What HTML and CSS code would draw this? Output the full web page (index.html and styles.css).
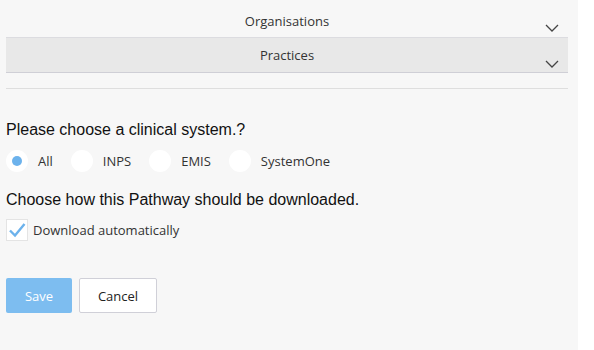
FILE: index.html
```html
<!DOCTYPE html>
<html lang="en">
<head>
    <meta charset="UTF-8">
    <meta name="viewport" content="width=device-width, initial-scale=1.0">
    <title>Pathway Settings</title>
    <link rel="stylesheet" href="styles.css">
</head>
<body>
    <div class="panel">
        <div class="accordion">
            <div class="acc-item">
                <span class="acc-title">Organisations</span>
                <svg class="chevron" width="14" height="8" viewBox="0 0 14 8"><path d="M1 1 L7 7 L13 1" fill="none" stroke="#444" stroke-width="1.3"/></svg>
            </div>
            <div class="acc-item acc-active">
                <span class="acc-title">Practices</span>
                <svg class="chevron" width="14" height="8" viewBox="0 0 14 8"><path d="M1 1 L7 7 L13 1" fill="none" stroke="#444" stroke-width="1.3"/></svg>
            </div>
        </div>
        <hr class="divider">

        <h2 class="question">Please choose a clinical system.?</h2>
        <div class="radio-group">
            <label class="radio"><span class="radio-circle checked"></span>All</label>
            <label class="radio"><span class="radio-circle"></span>INPS</label>
            <label class="radio"><span class="radio-circle"></span>EMIS</label>
            <label class="radio"><span class="radio-circle"></span>SystemOne</label>
        </div>

        <h2 class="question">Choose how this Pathway should be downloaded.</h2>
        <label class="checkbox">
            <span class="check-box">
                <svg width="18" height="16" viewBox="0 0 18 16"><path d="M2 8.5 L7 13.5 L16.5 2" fill="none" stroke="#6cb2ec" stroke-width="2.4"/></svg>
            </span>
            Download automatically
        </label>

        <div class="actions">
            <button class="btn btn-save">Save</button>
            <button class="btn btn-cancel">Cancel</button>
        </div>
    </div>
</body>
</html>
```

FILE: styles.css
```css
body {
    margin: 0;
    background-color: #fff;
    font-family: "Open Sans", "Noto Sans", sans-serif;
    color: #333;
}

.panel {
    width: 562px;
    height: 350px;
    padding: 0 10px 0 6px;
    background-color: #f7f7f7;
    overflow: hidden;
}

.accordion {
    display: flex;
    flex-direction: column;
}

.acc-item {
    position: relative;
    height: 36px;
    display: flex;
    justify-content: center;
    padding-top: 1px;
    border-bottom: 1px solid #dcdce0;
    font-size: 13px;
    line-height: 40px;
    color: #333;
}

.acc-active {
    height: 33px;
    background-color: #e8e8e8;
    border-bottom: 1px solid #cfcfd6;
    line-height: 33px;
}

.chevron {
    position: absolute;
    right: 9px;
    bottom: 5px;
}

.acc-active .chevron {
    bottom: 4px;
}

.divider {
    margin: 15px 0 0 0;
    border: none;
    border-top: 1px solid #dedede;
}

.question {
    margin: 32px 0 0 0;
    font-family: "Liberation Sans", Arial, sans-serif;
    font-size: 16px;
    font-weight: normal;
    color: #111;
}

.question + .radio-group {
    margin-top: 11px;
}

.question + .checkbox {
    margin-top: 10px;
}

.radio-group + .question {
    margin-top: 19px;
}

.radio-group {
    display: flex;
}

.radio {
    display: flex;
    align-items: center;
    font-size: 13px;
    color: #333;
    margin-right: 18px;
}

.radio-circle {
    width: 22px;
    height: 22px;
    border-radius: 50%;
    background-color: #fff;
    margin-right: 10px;
    display: flex;
    align-items: center;
    justify-content: center;
}

.radio-circle.checked::after {
    content: "";
    width: 10px;
    height: 10px;
    border-radius: 50%;
    background-color: #6cb2ec;
}

.checkbox {
    display: flex;
    align-items: center;
    font-size: 13px;
    color: #333;
}

.check-box {
    width: 20px;
    height: 20px;
    border: 1px solid #e4e4e4;
    background-color: #fff;
    margin-right: 5px;
    display: flex;
    align-items: center;
    justify-content: center;
}

.actions {
    display: flex;
    gap: 7px;
    margin-top: 37px;
}

.btn {
    height: 35px;
    border-radius: 2px;
    font-family: "Open Sans", "Noto Sans", sans-serif;
    font-size: 13px;
}

.btn-save {
    width: 66px;
    border: none;
    background-color: #7dbdf0;
    color: #fff;
}

.btn-cancel {
    width: 78px;
    border: 1px solid #d0d0d8;
    background-color: #fff;
    color: #222;
}
```
